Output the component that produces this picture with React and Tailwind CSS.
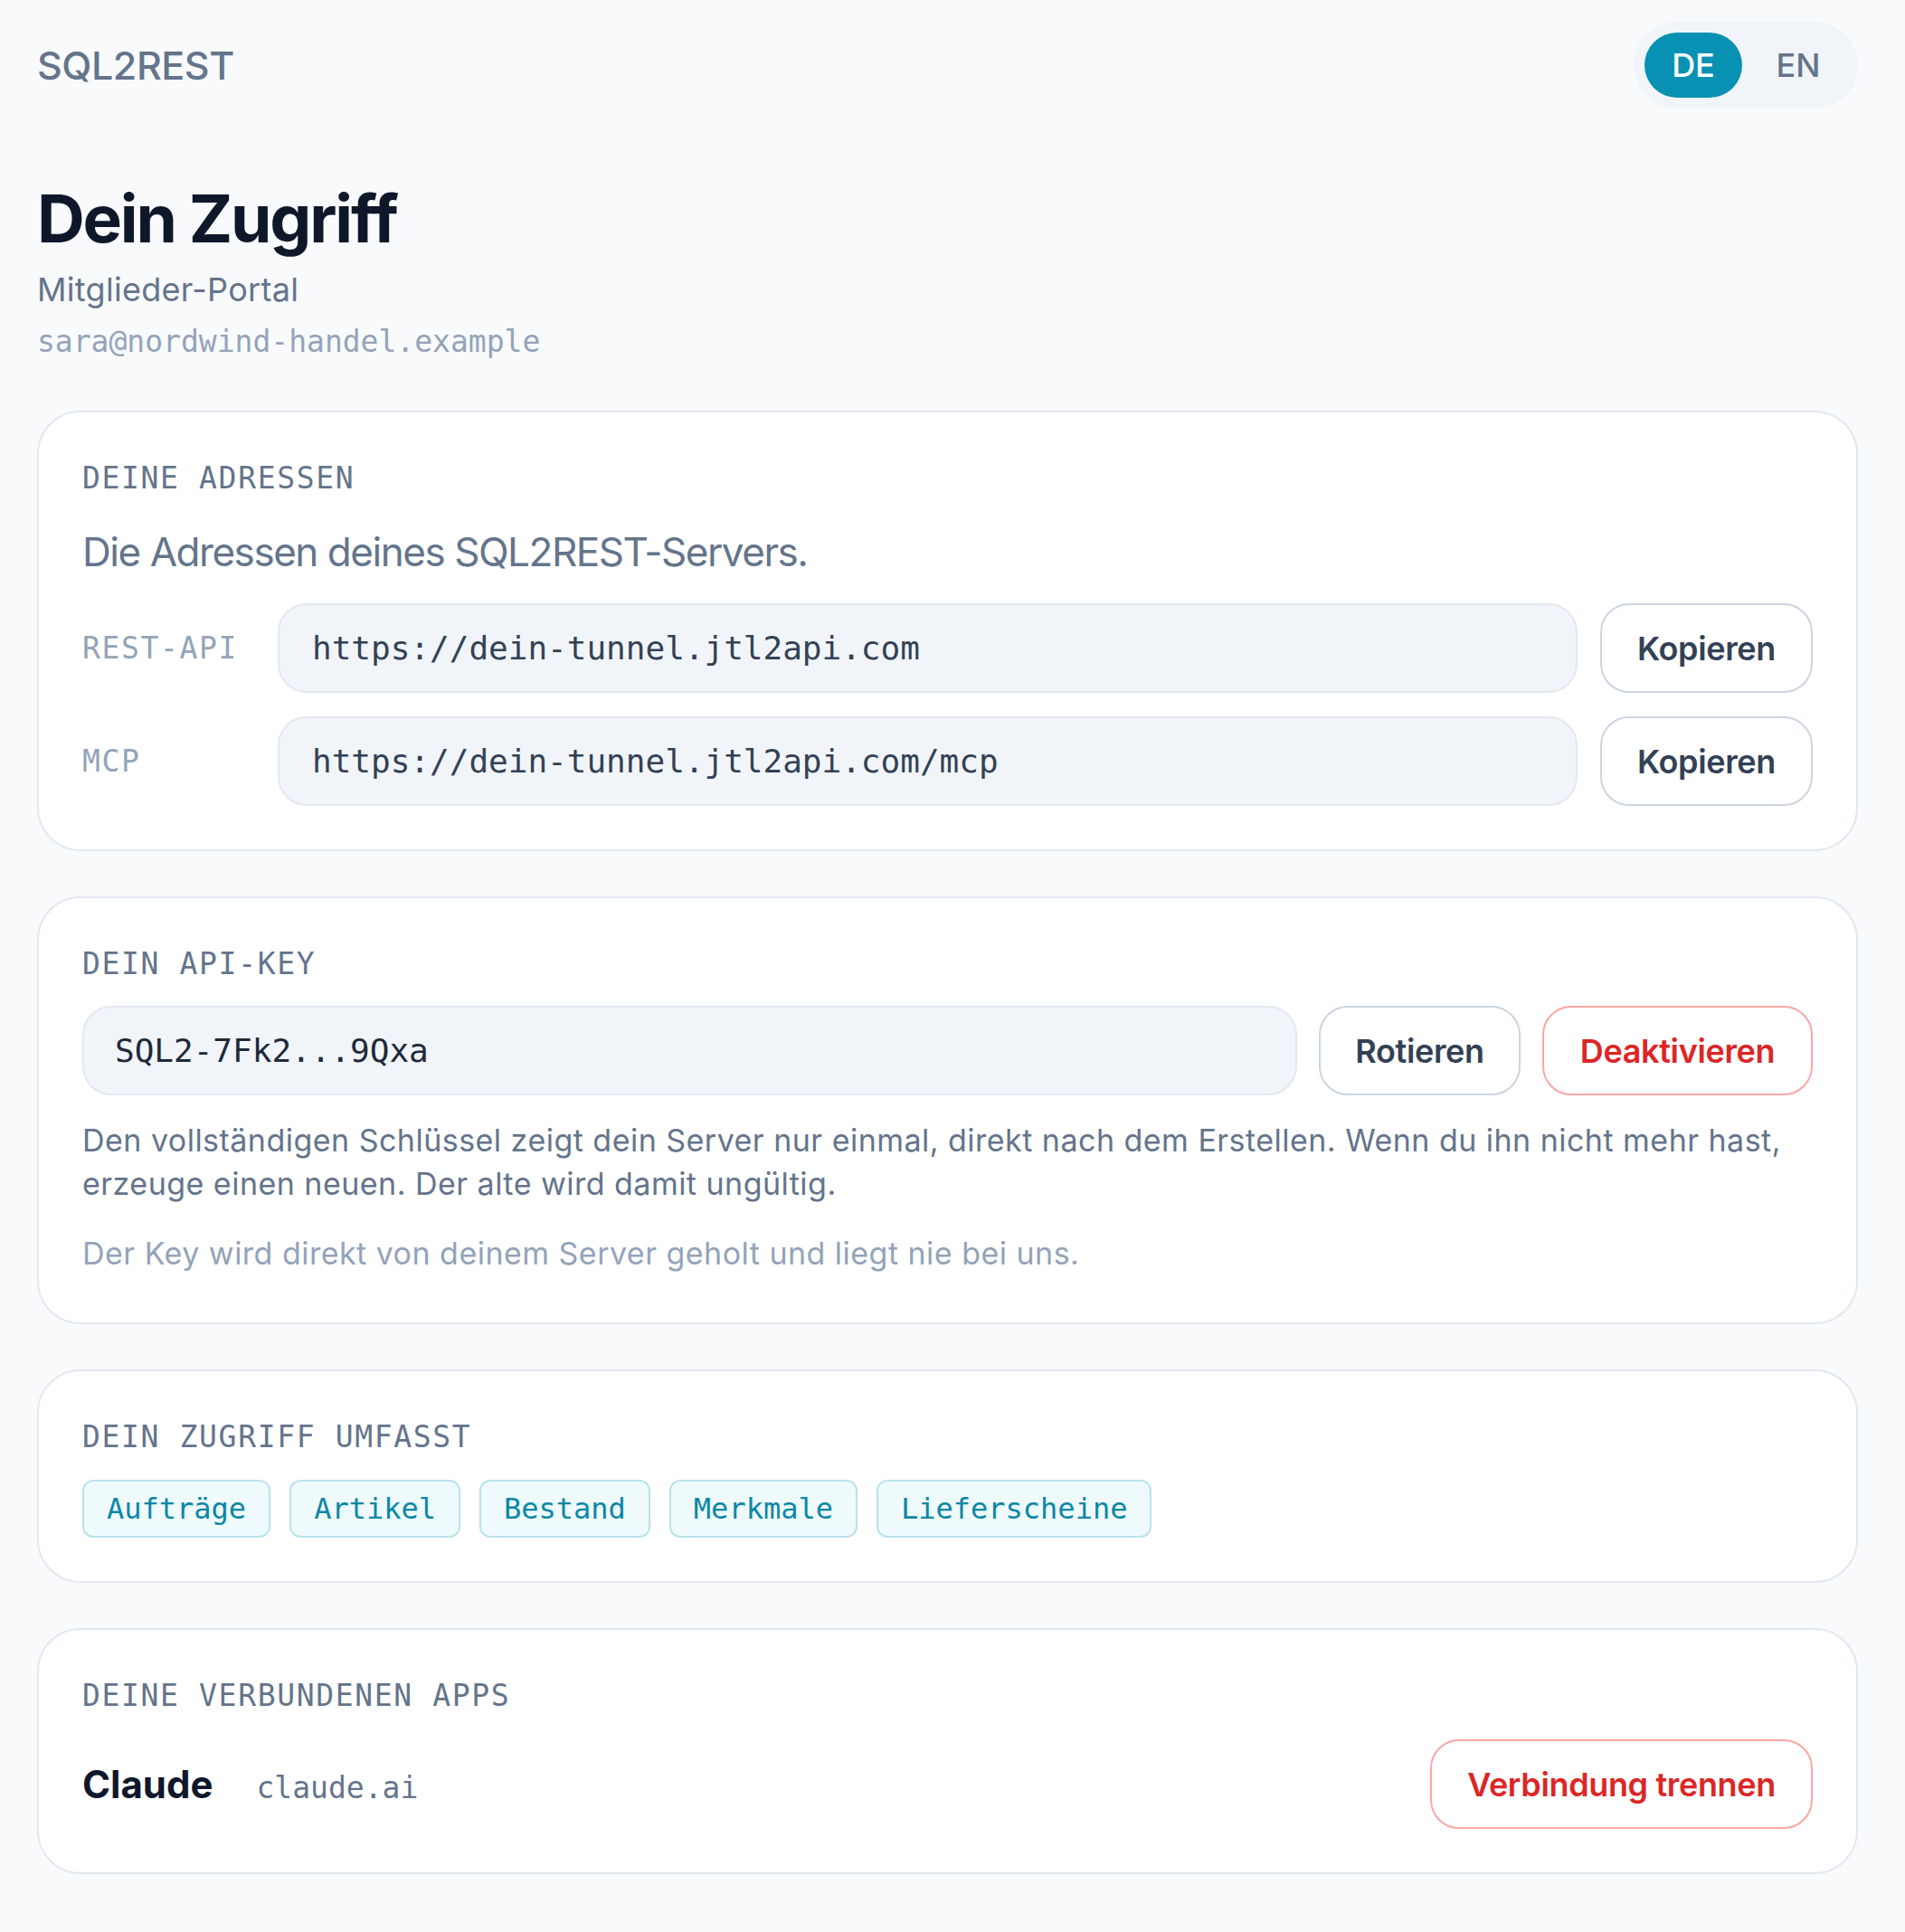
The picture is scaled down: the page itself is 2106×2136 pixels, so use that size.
const labels = [
  { name: "REST-API", url: "https://dein-tunnel.jtl2api.com" },
  { name: "MCP", url: "https://dein-tunnel.jtl2api.com/mcp" },
];

const scopes = ["Aufträge", "Artikel", "Bestand", "Merkmale", "Lieferscheine"];

const SectionLabel = ({ children }) => (
  <p className="font-['DejaVu_Sans_Mono',monospace] text-[33px] leading-[49px] tracking-[0.05em] uppercase text-[#64748b]">
    {children}
  </p>
);

const Card = ({ children, className = "" }) => (
  <section
    className={`rounded-[48px] border-2 border-[#e2e8f0] bg-white px-[48px] pt-[48px] ${className}`}
  >
    {children}
  </section>
);

const App = () => {
  return (
    <div className="min-h-screen bg-[#f8fafc] pl-[41px] pr-[52px] pb-[63px] pt-[24px] font-['Inter',sans-serif]">
      {/* header */}
      <header className="flex items-center justify-between">
        <span className="text-[43px] font-medium tracking-[-0.01em] text-[#64748b]">
          SQL2REST
        </span>
        <div className="flex gap-[8px] rounded-full bg-[#f1f5f9] p-[12px]">
          <button className="flex h-[72px] w-[108px] items-center justify-center rounded-full bg-[#0891b2] text-[36px] font-medium text-white">
            DE
          </button>
          <button className="flex h-[72px] w-[108px] items-center justify-center rounded-full text-[36px] font-medium text-[#64748b]">
            EN
          </button>
        </div>
      </header>

      <div className="mt-[82px]">
        <h1 className="text-[73px] leading-[80px] font-bold tracking-[-0.03em] text-[#0f172a]">
          Dein Zugriff
        </h1>
        <p className="mt-[14px] text-[36px] leading-[48px] tracking-[0.008em] text-[#64748b]">
          Mitglieder-Portal
        </p>
        <p className="mt-[12px] font-['DejaVu_Sans_Mono',monospace] text-[33px] leading-[44px] text-[#94a3b8]">
          sara@nordwind-handel.example
        </p>
      </div>

      <div className="mt-[54px] flex flex-col gap-[50px]">
        {/* addresses */}
        <Card className="pb-[48px]">
          <SectionLabel>Deine Adressen</SectionLabel>
          <p className="mt-[27px] text-[44px] leading-[60px] tracking-[-0.033em] text-[#64748b]">
            Die Adressen deines SQL2REST-Servers.
          </p>
          <div className="mt-[27px] flex flex-col gap-[26px]">
            {labels.map((row) => (
              <div key={row.name} className="flex items-center">
                <span className="w-[216px] shrink-0 font-['DejaVu_Sans_Mono',monospace] text-[33px] tracking-[0.05em] text-[#94a3b8]">
                  {row.name}
                </span>
                <div className="flex h-[99px] flex-1 items-center rounded-[32px] border-2 border-[#e2e8f0] bg-[#f1f5f9] px-[36px] font-['DejaVu_Sans_Mono',monospace] text-[36px] text-[#334155]">
                  {row.url}
                </div>
                <button className="ml-[25px] h-[99px] w-[235px] shrink-0 rounded-[32px] border-2 border-[#cbd5e1] bg-white text-[36px] font-semibold tracking-[-0.01em] text-[#334155]">
                  Kopieren
                </button>
              </div>
            ))}
          </div>
        </Card>

        {/* api key */}
        <Card className="pb-[52px]">
          <SectionLabel>Dein API-Key</SectionLabel>
          <div className="mt-[22px] flex gap-[24px]">
            <div className="flex h-[99px] flex-1 items-center rounded-[32px] border-2 border-[#e2e8f0] bg-[#f1f5f9] px-[34px] font-['DejaVu_Sans_Mono',monospace] text-[36px] text-[#1e293b]">
              SQL2-7Fk2...9Qxa
            </div>
            <button className="h-[99px] w-[223px] shrink-0 rounded-[32px] border-2 border-[#cbd5e1] bg-white text-[36px] font-semibold tracking-[-0.01em] text-[#334155]">
              Rotieren
            </button>
            <button className="h-[99px] w-[299px] shrink-0 rounded-[32px] border-2 border-[#fca5a5] bg-white text-[36px] font-semibold tracking-[-0.01em] text-[#dc2626]">
              Deaktivieren
            </button>
          </div>
          <p className="mt-[26px] text-[34px] leading-[48px] tracking-[0.014em] text-[#64748b]">
            Den vollständigen Schlüssel zeigt dein Server nur einmal, direkt nach dem Erstellen. Wenn du ihn nicht mehr hast, erzeuge einen neuen. Der alte wird damit ungültig.
          </p>
          <p className="mt-[29px] text-[34px] leading-[48px] tracking-[0.014em] text-[#94a3b8]">
            Der Key wird direkt von deinem Server geholt und liegt nie bei uns.
          </p>
        </Card>

        {/* scopes */}
        <Card className="pb-[48px]">
          <SectionLabel>Dein Zugriff umfasst</SectionLabel>
          <div className="mt-[23px] flex flex-wrap gap-[21px]">
            {scopes.map((s) => (
              <span
                key={s}
                className="flex h-[64px] items-center rounded-[12px] border-2 border-[#b9e3ec] bg-[#effafc] px-[25px] font-['DejaVu_Sans_Mono',monospace] text-[32px] text-[#0a87a6]"
              >
                {s}
              </span>
            ))}
          </div>
        </Card>

        {/* connected apps */}
        <Card className="pb-[48px]">
          <SectionLabel>Deine verbundenen Apps</SectionLabel>
          <div className="mt-[24px] flex items-center justify-between">
            <div className="flex items-baseline gap-[48px]">
              <span className="text-[42px] font-bold text-[#0f172a]">
                Claude
              </span>
              <span className="font-['DejaVu_Sans_Mono',monospace] text-[33px] text-[#64748b]">
                claude.ai
              </span>
            </div>
            <button className="h-[99px] w-[423px] rounded-[32px] border-2 border-[#fca5a5] bg-white text-[36px] font-semibold tracking-[-0.01em] text-[#dc2626]">
              Verbindung trennen
            </button>
          </div>
        </Card>
      </div>
    </div>
  );
};

export default App;
